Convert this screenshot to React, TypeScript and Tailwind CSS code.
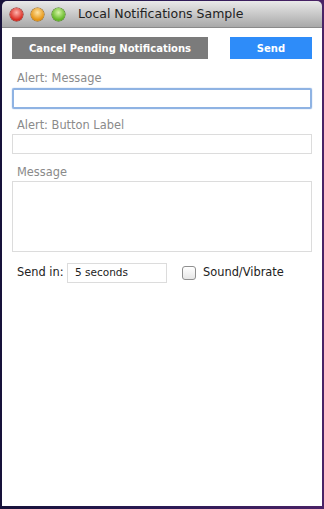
import React from "react";

const font = { fontFamily: '"DejaVu Sans", "Liberation Sans", sans-serif' };

const Light: React.FC<{ from: string; to: string; ring: string }> = ({ from, to, ring }) => (
	<div
		className="w-[13px] h-[13px] rounded-full"
		style={{ background: `radial-gradient(circle at 50% 35%, ${from} 0%, ${to} 70%)`, boxShadow: `0 0 0 0.5px ${ring}` }}
	/>
);

const App: React.FC = () => {
	return (
		<div
			className="w-[324px] h-[509px] pt-[1px] px-[2px] bg-gradient-to-r from-[#17123a] via-[#2b1a55] to-[#4a2266] overflow-hidden"
			style={font}
		>
			<div className="w-[320px] h-[505px] flex flex-col rounded-t-[5px] overflow-hidden">
				<div className="h-[27px] shrink-0 flex items-center gap-[8px] pl-[8px] bg-gradient-to-b from-[#e9e9e9] to-[#a9a9a9] border-b border-[#8a8a8a]">
					<Light from="#ffb3ad" to="#d8261c" ring="#8c1a13" />
					<Light from="#ffe2a0" to="#e5920e" ring="#99600a" />
					<Light from="#d6f5a6" to="#5fb520" ring="#3d7a12" />
					<span className="ml-[5px] text-[12.5px] text-[#222]">Local Notifications Sample</span>
				</div>
				<div className="flex-1 bg-white px-[10px] pt-[9px]">
					<div className="flex justify-between">
						<button className="w-[196px] h-[22px] bg-[#7b7b7b] text-white text-[10px] font-bold">
							Cancel Pending Notifications
						</button>
						<button className="w-[82px] h-[22px] bg-[#2e8cf9] text-white text-[10px] font-bold">Send</button>
					</div>
					<div className="mt-[12px] h-[14px] leading-[14px] pl-[5px] text-[11.4px] text-[#8a8a8a]">Alert: Message</div>
					<div className="mt-[3px] h-[21px] border-2 border-[#8fb3e3] rounded-[2px] shadow-[0_0_1px_#5b8fd6]" />
					<div className="mt-[9px] h-[14px] leading-[14px] pl-[5px] text-[11.4px] text-[#8a8a8a]">Alert: Button Label</div>
					<div className="mt-[2px] h-[20px] border border-[#dcdcdc]" />
					<div className="mt-[11px] h-[14px] leading-[14px] pl-[5px] text-[11.4px] text-[#8a8a8a]">Message</div>
					<div className="mt-[2px] h-[71px] border border-[#dcdcdc]" />
					<div className="mt-[11px] flex items-center h-[20px]">
						<span className="w-[55px] pl-[5px] text-[11.4px] text-[#222]">Send in:</span>
						<div className="w-[100px] h-[20px] border border-[#dcdcdc] flex items-center pl-[7px] text-[10.5px] text-[#222]">
							5 seconds
						</div>
						<div className="ml-[15px] w-[14px] h-[14px] rounded-[3px] border border-[#8f8f8f] bg-gradient-to-b from-[#ffffff] to-[#e6e6e6]" />
						<span className="ml-[7px] text-[11.4px] text-[#222]">Sound/Vibrate</span>
					</div>
				</div>
			</div>
		</div>
	);
};

export default App;
